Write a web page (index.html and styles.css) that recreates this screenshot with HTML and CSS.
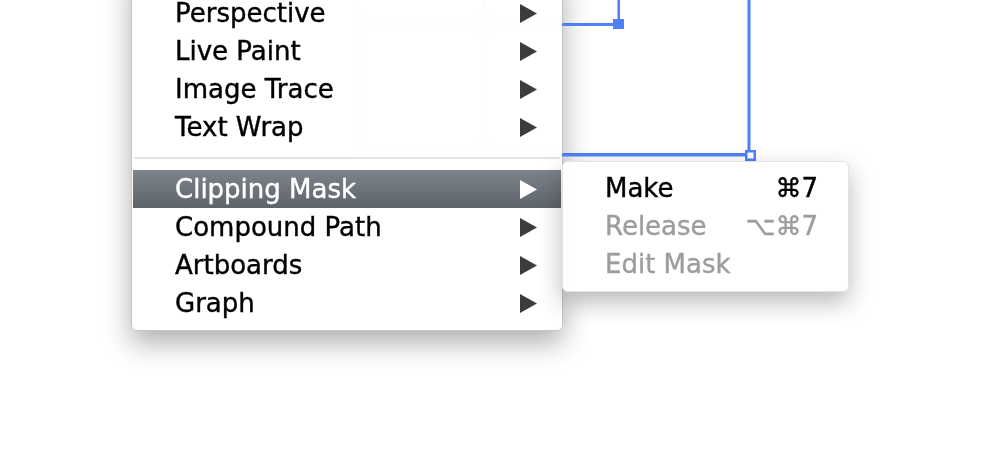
FILE: index.html
```html
<!DOCTYPE html>
<html lang="en">
  <head>
    <meta charset="UTF-8" />
    <meta name="viewport" content="width=device-width, initial-scale=1.0" />
    <title>Object Menu</title>
    <link rel="stylesheet" href="styles.css">
  </head>
  <body>
    <div class="stage">
      <!-- artboard guides, seen blurred through the menu -->
      <svg class="guides" width="986" height="464" viewBox="0 0 986 464">
        <g fill="#4f80f8">
          <rect x="356" y="0" width="3" height="157" />
          <rect x="482" y="0" width="3" height="157" />
          <rect x="356" y="23" width="262" height="3" />
          <rect x="356" y="153" width="394" height="3" />
        </g>
      </svg>

      <div class="menu main-menu">
        <div class="item">
          <span class="label">Perspective</span>
          <svg class="arrow" viewBox="0 0 17 19"><polygon points="0,0 17,9.5 0,19" /></svg>
        </div>
        <div class="item">
          <span class="label">Live Paint</span>
          <svg class="arrow" viewBox="0 0 17 19"><polygon points="0,0 17,9.5 0,19" /></svg>
        </div>
        <div class="item">
          <span class="label">Image Trace</span>
          <svg class="arrow" viewBox="0 0 17 19"><polygon points="0,0 17,9.5 0,19" /></svg>
        </div>
        <div class="item">
          <span class="label">Text Wrap</span>
          <svg class="arrow" viewBox="0 0 17 19"><polygon points="0,0 17,9.5 0,19" /></svg>
        </div>
        <div class="separator"></div>
        <div class="item selected">
          <span class="label">Clipping Mask</span>
          <svg class="arrow" viewBox="0 0 17 19"><polygon points="0,0 17,9.5 0,19" /></svg>
        </div>
        <div class="item">
          <span class="label">Compound Path</span>
          <svg class="arrow" viewBox="0 0 17 19"><polygon points="0,0 17,9.5 0,19" /></svg>
        </div>
        <div class="item">
          <span class="label">Artboards</span>
          <svg class="arrow" viewBox="0 0 17 19"><polygon points="0,0 17,9.5 0,19" /></svg>
        </div>
        <div class="item">
          <span class="label">Graph</span>
          <svg class="arrow" viewBox="0 0 17 19"><polygon points="0,0 17,9.5 0,19" /></svg>
        </div>
      </div>

      <!-- artboard edges to the right of the menu -->
      <svg class="artboard" width="424" height="170" viewBox="562 0 424 170">
        <g fill="#4f80f8">
          <rect x="562" y="23.5" width="56" height="2.5" />
          <rect x="617.5" y="0" width="2.5" height="22" />
          <rect x="613" y="19" width="11" height="10" />
          <rect x="562" y="153.5" width="184" height="3" />
          <rect x="747.5" y="0" width="3" height="152" />
        </g>
        <rect x="746.25" y="151.25" width="8.5" height="8.5" fill="#fff" stroke="#4f80f8" stroke-width="2.5" />
      </svg>

      <div class="menu sub-menu">
        <div class="item">
          <span class="label">Make</span>
          <span class="shortcut">&#8984;7</span>
        </div>
        <div class="item disabled">
          <span class="label">Release</span>
          <span class="shortcut">&#8997;&#8984;7</span>
        </div>
        <div class="item disabled">
          <span class="label">Edit Mask</span>
        </div>
      </div>
    </div>
  </body>
</html>
```

FILE: styles.css
```css
body {
  margin: 0;
  background: #ffffff;
  font-family: "DejaVu Sans", "Lucida Grande", sans-serif;
}
.stage {
  position: relative;
  width: 986px;
  height: 464px;
  overflow: hidden;
  background: #ffffff;
}
.guides {
  position: absolute;
  left: 0;
  top: 0;
}
.artboard {
  position: absolute;
  left: 562px;
  top: 0;
  z-index: 2;
}
.menu {
  position: absolute;
  box-sizing: border-box;
  background: rgba(255, 255, 255, 0.96);
  backdrop-filter: blur(6px);
  border-radius: 6px;
  font-size: 26px;
  color: #000000;
  -webkit-text-stroke: 0.4px currentColor;
}
.main-menu {
  left: 131px;
  top: -30px;
  width: 432px;
  padding: 23px 1px 8px;
  border: 1px solid #c6c6c6;
  box-shadow: 0 12px 28px rgba(0, 0, 0, 0.32);
  z-index: 1;
}
.sub-menu {
  left: 562px;
  top: 161px;
  width: 287px;
  padding: 7px 0 8px;
  border: 1px solid #e2e2e2;
  box-shadow: 0 10px 24px rgba(0, 0, 0, 0.28);
  z-index: 3;
}
.item {
  display: flex;
  align-items: center;
  justify-content: space-between;
  height: 38px;
  line-height: 38px;
  white-space: nowrap;
}
.main-menu .item {
  padding: 0 24px 0 42px;
}
.sub-menu .item {
  padding: 0 30px 0 42px;
}
.arrow {
  width: 17px;
  height: 19px;
  fill: #3c3c3c;
}
.item.selected {
  background: linear-gradient(#7c838b, #5d646c);
  color: #ffffff;
}
.item.selected .arrow {
  fill: #ffffff;
}
.item.disabled {
  color: #9d9d9d;
}
.separator {
  height: 2px;
  margin: 11px 1px;
  background: #e3e3e3;
}
```
